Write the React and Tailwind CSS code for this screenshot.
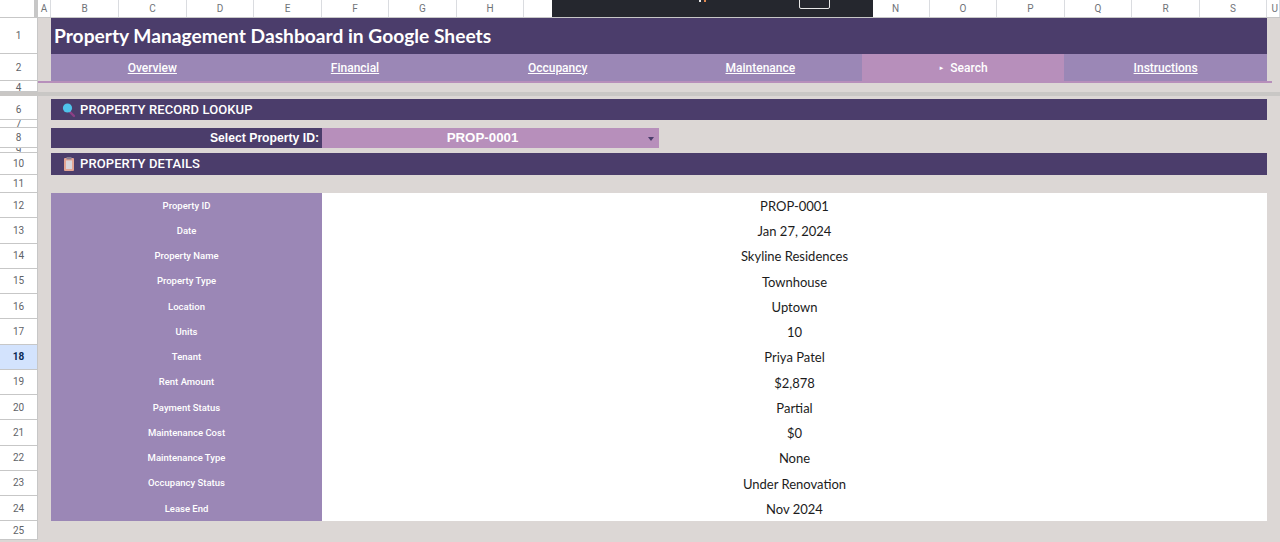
const sans = "font-['Roboto','Noto_Sans',sans-serif]";

const columns = [
  ["A", 13], ["B", 68], ["C", 68], ["D", 67], ["E", 68], ["F", 67], ["G", 68], ["H", 67],
  ["I", 68], ["J", 67], ["K", 68], ["L", 67], ["M", 68], ["N", 68], ["O", 67], ["P", 68],
  ["Q", 67], ["R", 68], ["S", 67], ["U", 13],
];

const records = [
  ["12", "Property ID", "PROP-0001"],
  ["13", "Date", "Jan 27, 2024"],
  ["14", "Property Name", "Skyline Residences"],
  ["15", "Property Type", "Townhouse"],
  ["16", "Location", "Uptown"],
  ["17", "Units", "10"],
  ["18", "Tenant", "Priya Patel"],
  ["19", "Rent Amount", "$2,878"],
  ["20", "Payment Status", "Partial"],
  ["21", "Maintenance Cost", "$0"],
  ["22", "Maintenance Type", "None"],
  ["23", "Occupancy Status", "Under Renovation"],
  ["24", "Lease End", "Nov 2024"],
];

const tabs = ["Overview", "Financial", "Occupancy", "Maintenance", "Search", "Instructions"];

function Row({ n, h, active, children }) {
  return (
    <div className="flex" style={{ height: h }}>
      <div className={`w-[38px] shrink-0 flex items-center justify-center border-b border-r border-[#c7c7c7] text-[10px] overflow-hidden ${active ? "bg-[#d3e3fd] font-bold text-[#0b2a55]" : "bg-white text-[#5f6368]"}`}>
        {n}
      </div>
      <div className="w-[13px] shrink-0" />
      <div className="flex-1 min-w-0">{children}</div>
      <div className="w-[13px] shrink-0" />
    </div>
  );
}

function Bar({ icon, children }) {
  return (
    <div className="h-full bg-[#4b3d6b] flex items-center pl-[11px] gap-[4px] text-white text-[13px] font-medium tracking-[0.1px]">
      {icon}
      <span>{children}</span>
    </div>
  );
}

function Lens() {
  return (
    <svg width="14" height="16" viewBox="0 0 14 16">
      <line x1="8" y1="10" x2="12" y2="14" stroke="#8d3f86" strokeWidth="2.4" strokeLinecap="round" />
      <circle cx="5.5" cy="6" r="4.6" fill="#4fc3ea" />
    </svg>
  );
}

function Clipboard() {
  return (
    <svg width="14" height="16" viewBox="0 0 14 16">
      <rect x="2" y="2" width="10" height="13" rx="1" fill="#e3a594" />
      <rect x="4" y="4.5" width="6" height="8.5" fill="#d9d6dc" />
      <rect x="4.5" y="1" width="5" height="2.4" fill="#8a7f93" />
    </svg>
  );
}

export default function App() {
  return (
    <div className={`relative w-[1280px] h-[542px] overflow-hidden bg-[#dcd7d5] ${sans}`}>
      <div className="flex h-[18px] bg-white border-b border-[#c7c7c7] text-[10px] text-[#6f7378]">
        <div className="w-[38px] shrink-0 border-r-4 border-[#c7c7c7]" />
        {columns.map(([name, w]) => (
          <div key={name} className={`flex items-center border-r border-[#dadce0] shrink-0 overflow-hidden ${name === "U" ? "justify-end pr-[1px]" : "justify-center"}`} style={{ width: w }}>
            {name}
          </div>
        ))}
      </div>

      <div className="absolute left-[552px] top-0 w-[321px] h-[17px] bg-[#25272e] overflow-hidden">
        <div className="absolute left-[147px] top-0 w-[2px] h-[2px] bg-[#e8e8e8]" />
        <div className="absolute left-[152px] top-0 w-[2px] h-[2px] bg-[#e0884f]" />
        <div className="absolute left-[247px] top-[-10px] w-[31px] h-[19px] border border-[#e8e8e8] rounded-[2px]" />
      </div>

      <Row n="1" h={36}>
        <div className="h-full bg-[#4b3d6b] flex items-center pl-[3px] pt-[1px] text-white text-[19.2px] font-bold font-['Lato',sans-serif]">
          Property Management Dashboard in Google Sheets
        </div>
      </Row>

      <Row n="2" h={27}>
        <div className="h-full grid grid-cols-6 bg-[#9b87b6] text-white text-[12px] font-medium">
          {tabs.map((t) =>
            t === "Search" ? (
              <div key={t} className="bg-[#b78fbb] flex items-center justify-center gap-[6px]">
                <span className="text-[6px]">►</span>
                <span>{t}</span>
              </div>
            ) : (
              <div key={t} className="flex items-center justify-center underline">{t}</div>
            )
          )}
        </div>
      </Row>

      <div className="flex h-[2px]">
        <div className="w-[38px] shrink-0 bg-white border-r border-[#c7c7c7]" />
        <div className="w-[1234px] bg-[#b78fbb]" />
      </div>

      <Row n="4" h={9} />
      <div className="h-[4px] bg-[#c9c7c5]" />

      <div className="flex h-[3px]">
        <div className="w-[38px] bg-white border-r border-[#c7c7c7]" />
      </div>
      <Row n="6" h={21}>
        <Bar icon={<Lens />}>PROPERTY RECORD LOOKUP</Bar>
      </Row>
      <Row n="7" h={8} />
      <Row n="8" h={20}>
        <div className="h-full flex">
          <div className="w-[271px] bg-[#4b3d6b] flex items-center justify-end pr-[3px] text-white text-[12.2px] font-bold font-['Liberation_Sans',sans-serif]">
            Select Property ID:
          </div>
          <div className="relative w-[337px] bg-[#b78fbb] flex items-center justify-center text-white text-[13.3px] font-bold font-['Liberation_Sans',sans-serif]">
            <span className="pr-[16px]">PROP-0001</span>
            <span className="absolute right-[5px] top-[9px] w-0 h-0 border-x-[3.5px] border-x-transparent border-t-[4px] border-t-[#4b3d6b]" />
          </div>
        </div>
      </Row>
      <Row n="9" h={5} />
      <Row n="10" h={22}>
        <Bar icon={<Clipboard />}>PROPERTY DETAILS</Bar>
      </Row>
      <Row n="11" h={18} />

      {records.map(([n, label, value]) => (
        <Row key={n} n={n} h={25.25} active={n === "18"}>
          <div className="h-full flex">
            <div className="w-[271px] bg-[#9b87b6] flex items-center justify-center text-white text-[9.5px] font-medium">
              {label}
            </div>
            <div className="flex-1 bg-white flex items-center justify-center pt-[2px] text-[13px] text-[#1c1c1c] font-['Lato',sans-serif]">
              {value}
            </div>
          </div>
        </Row>
      ))}
      <Row n="25" h={19} />
    </div>
  );
}
